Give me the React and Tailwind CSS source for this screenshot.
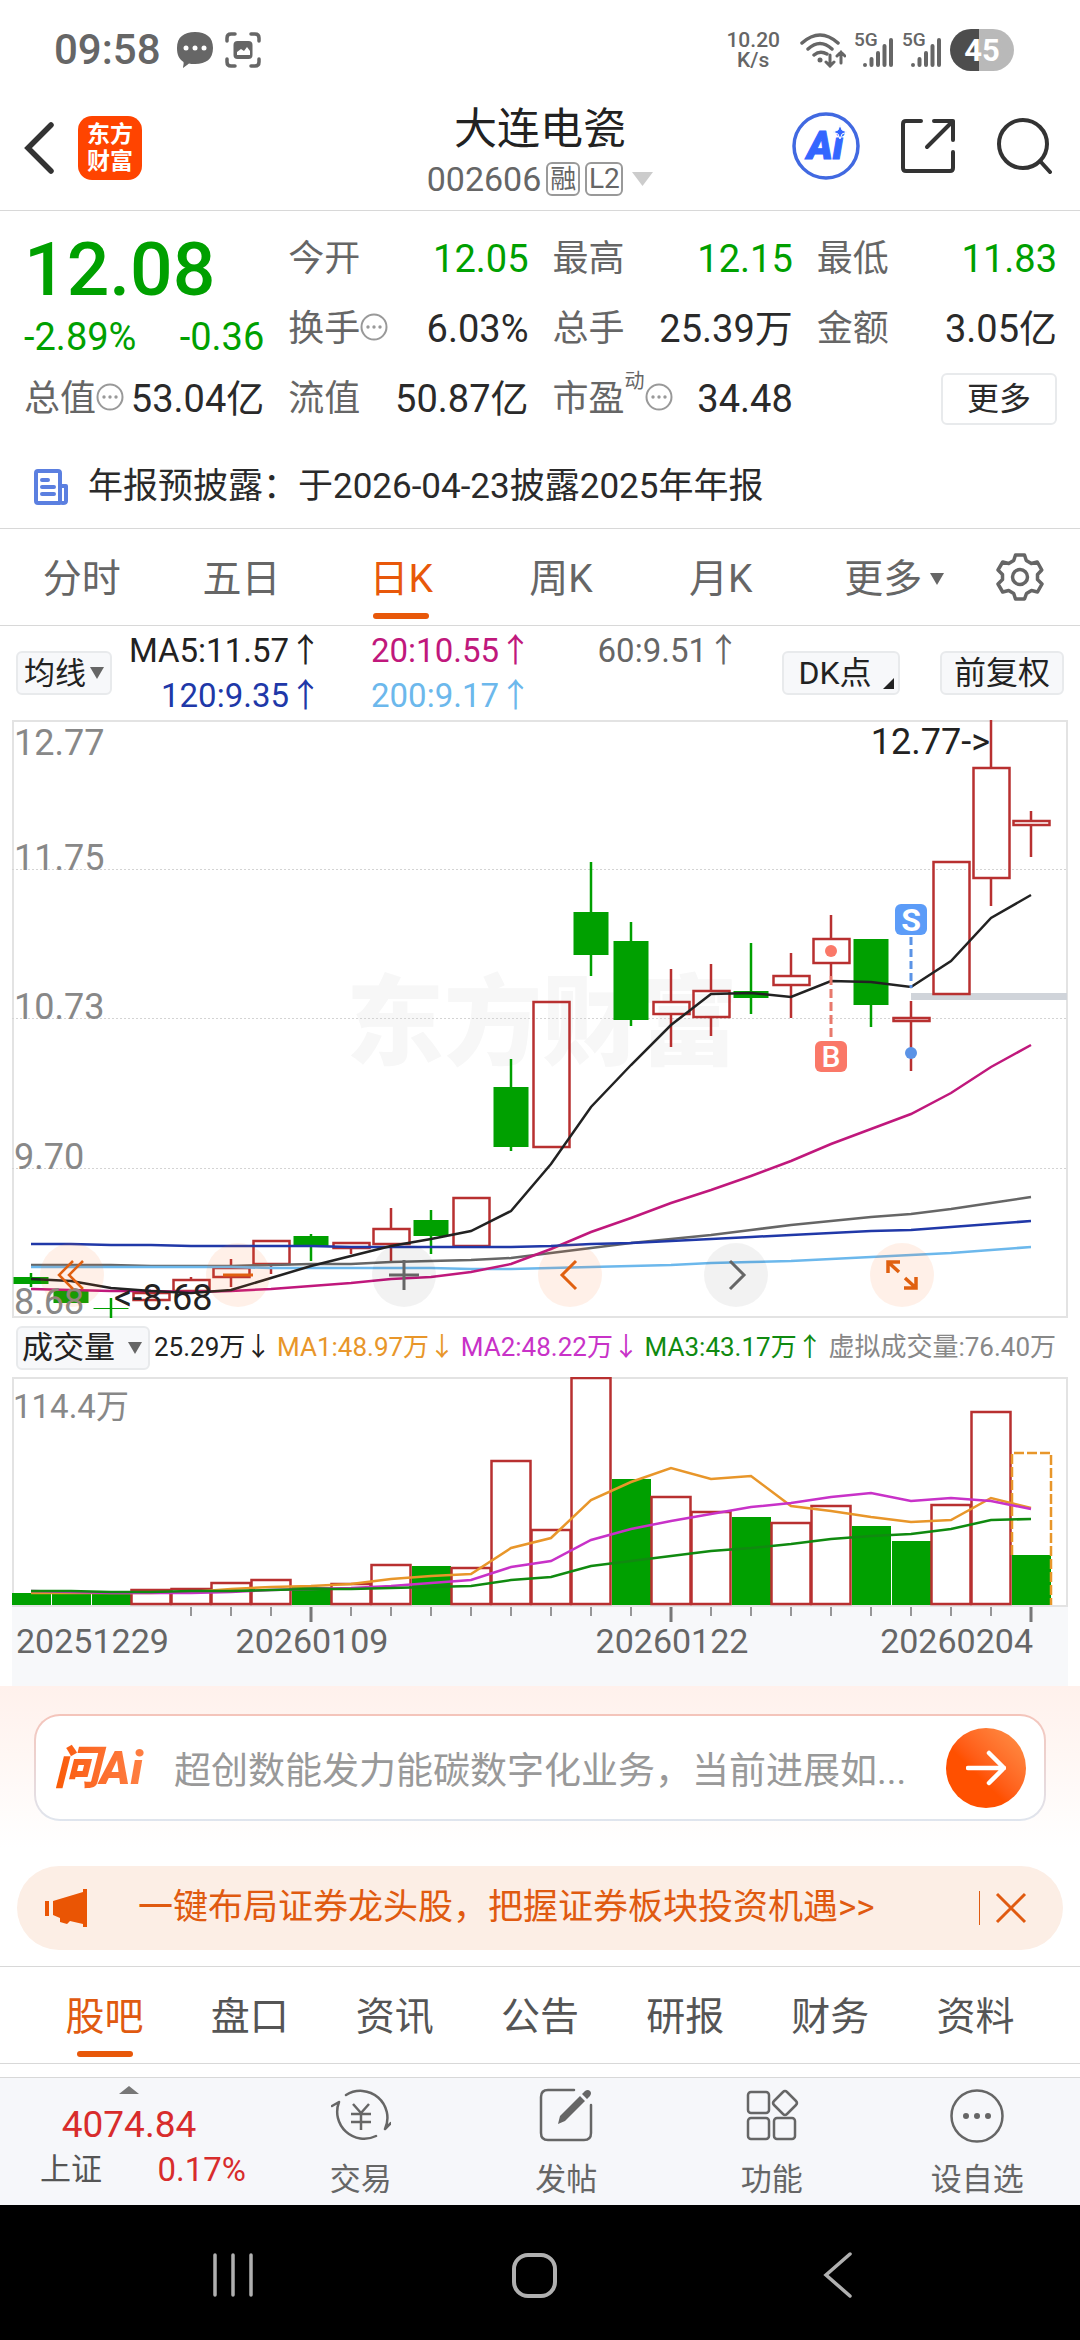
import { useState } from "react";

const STEP = 40;
const xAt = (i) => 19 + i * STEP;

// [color, high, bodyTop, bodyBottom, low]
const candles = [
  ["g", 553, 557, 564, 567],
  ["g", 571, 571, 583, 583],
  ["g", 578, 588, 589, 598],
  ["r", 572, 573, 580, 580],
  ["r", 557, 560, 571, 571],
  ["r", 539, 548, 557, 567],
  ["r", 520, 521, 544, 554],
  ["g", 514, 516, 526, 541],
  ["r", 522, 523, 528, 534],
  ["r", 488, 509, 524, 541],
  ["g", 490, 500, 516, 534],
  ["r", 478, 478, 526, 526],
  ["g", 339, 367, 427, 431],
  ["r", 282, 282, 427, 427],
  ["g", 142, 192, 235, 256],
  ["g", 202, 221, 300, 306],
  ["r", 249, 282, 294, 327],
  ["r", 244, 271, 297, 316],
  ["g", 223, 271, 278, 294],
  ["r", 233, 256, 265, 298],
  ["r", 195, 219, 243, 256],
  ["g", 219, 219, 285, 307],
  ["r", 281, 298, 301, 351],
  ["r", 142, 142, 274, 274],
  ["r", 0, 48, 158, 186],
  ["r", 91, 101, 105, 137],
];

const ma5 = [559, 561, 568, 571, 573, 570, 558, 546, 536, 526, 519, 511, 491, 444, 387, 345, 305, 274, 273, 277, 261, 262, 267, 241, 198, 175];
const ma20 = [569, 570, 571, 571, 572, 571, 569, 566, 563, 559, 557, 552, 544, 529, 512, 498, 483, 470, 456, 441, 424, 409, 394, 373, 347, 325];
const ma60 = [545, 545, 545, 546, 546, 546, 545, 544, 544, 542, 541, 540, 538, 533, 528, 523, 519, 515, 510, 505, 501, 497, 494, 489, 483, 477];
const ma120 = [524, 524, 525, 525, 526, 526, 526, 526, 527, 527, 527, 527, 527, 526, 524, 523, 521, 519, 517, 515, 513, 511, 510, 507, 504, 501];
const ma200 = [547, 547, 547, 547, 547, 547, 548, 548, 548, 548, 548, 549, 549, 548, 547, 546, 545, 543, 542, 541, 539, 537, 535, 533, 530, 527];

// [color, top]
const volumes = [
  ["g", 216], ["g", 216], ["g", 216], ["r", 213], ["r", 212], ["r", 206], ["r", 203],
  ["g", 210], ["r", 207], ["r", 188], ["g", 189], ["r", 191], ["r", 84], ["r", 153],
  ["r", 1], ["g", 102], ["r", 120], ["r", 135], ["g", 140], ["r", 146], ["r", 129],
  ["g", 149], ["g", 164], ["r", 128], ["r", 35], ["g", 178],
];

const vol1 = [216, 216, 216, 216, 215, 212, 210, 209, 207, 202, 199, 197, 171, 161, 123, 105, 91, 102, 99, 129, 134, 140, 145, 143, 121, 131];
const vol2 = [214, 215, 216, 216, 216, 215, 213, 212, 211, 209, 206, 203, 190, 184, 163, 152, 144, 137, 130, 126, 120, 116, 124, 121, 124, 132];
const vol3 = [214, 214, 215, 215, 214, 214, 213, 212, 212, 211, 210, 209, 203, 200, 189, 184, 179, 174, 171, 167, 162, 159, 157, 152, 143, 142];

const toPoints = (values) => values.map((y, i) => `${xAt(i)},${y}`).join(" ");

const periods = ["分时", "五日", "日K", "周K", "月K"];
const sections = ["股吧", "盘口", "资讯", "公告", "研报", "财务", "资料"];

const Line = ({ values, className }) => (
  <polyline points={toPoints(values)} fill="none" strokeWidth="2.5" className={className} />
);

const InfoDot = () => (
  <svg viewBox="0 0 28 28" className="mb-1 size-7 shrink-0" fill="#999">
    <circle cx="14" cy="14" r="12.5" fill="none" stroke="#999" strokeWidth="2" />
    <circle cx="8" cy="14" r="1.7" />
    <circle cx="14" cy="14" r="1.7" />
    <circle cx="20" cy="14" r="1.7" />
  </svg>
);

const Caret = ({ className }) => (
  <svg viewBox="0 0 14 12" preserveAspectRatio="none" className={className} fill="currentColor">
    <path d="M0 0h14L7 12z" />
  </svg>
);

const Signal = () => (
  <div className="relative h-9 w-10">
    <span className="absolute left-0 top-0 text-[19px] leading-4 font-medium">5G</span>
    <svg viewBox="0 0 40 36" className="size-full" stroke="currentColor" strokeWidth="4" strokeLinecap="round">
      <path d="M11 33v.1M17.500 33v-6M24 33V21M30.500 33V14M37 33V8" />
    </svg>
  </div>
);

const StatusBar = () => (
  <div className="flex h-[100px] items-center justify-between pr-[66px] pl-[54px] text-[#666]">
    <div className="flex items-center gap-3">
      <span className="mr-1 text-[42px] leading-none font-medium">09:58</span>
      <svg viewBox="0 0 36 36" className="size-9" fill="currentColor">
        <path d="M18 0C29 0 36 5 36 16S29 32 18 32c-2 0-5 0-6-.5L6 36c0-2 1-4 .5-6C2 27 0 23 0 16 0 5 7 0 18 0z" />
        <g fill="#fff">
          <circle cx="9" cy="16" r="2.500" />
          <circle cx="18" cy="16" r="2.500" />
          <circle cx="27" cy="16" r="2.500" />
        </g>
      </svg>
      <svg viewBox="0 0 36 36" className="size-9" fill="none" stroke="currentColor" strokeWidth="3.500" strokeLinecap="round">
        <path d="M2 9V6q0-4 4-4h4M26 2h4q4 0 4 4v3M34 27v3q0 4-4 4h-4M10 34H6q-4 0-4-4v-3" />
        <rect x="8.500" y="9" width="19" height="18" rx="4" fill="currentColor" stroke="none" />
        <path d="M12 23v-3l4-3 3 2 3-4 3 4v4z" fill="#fff" stroke="none" />
      </svg>
    </div>
    <div className="flex items-center gap-2">
      <div className="mr-3 text-center text-[21px] leading-5 font-medium">
        <p>10.20</p>
        <p>K/s</p>
      </div>
      <svg viewBox="0 0 46 36" className="h-9 w-[46px]" fill="none" stroke="currentColor" strokeWidth="3.500" strokeLinecap="round">
        <path d="M2 11Q20-5 38 11M8 17Q20 6 32 17M14 23Q20 18 27 22" />
        <circle cx="20" cy="28" r="2.500" fill="currentColor" stroke="none" />
        <path d="M30 23v11M26 30l4 4 4-4M41 31V20M37 24l4-4 4 4" strokeWidth="3" />
      </svg>
      <Signal />
      <Signal />
      <div className="flex h-[42px] w-16 items-center justify-center rounded-full bg-linear-to-r from-[#4d4d4d] from-45% to-[#b9b9b9] to-45% text-[31px] leading-none font-bold text-white">
        45
      </div>
    </div>
  </div>
);

const Header = () => (
  <header className="grid h-[111px] grid-cols-[1fr_auto_1fr] items-start border-b border-[#d8d8d8] px-6">
    <div className="flex items-center gap-6 pt-4">
      <button aria-label="返回">
        <svg viewBox="0 0 30 54" className="h-[54px] w-[30px]" fill="none" stroke="#333" strokeWidth="5.500" strokeLinecap="round">
          <path d="M27 4L4 27l23 23" />
        </svg>
      </button>
      <div className="flex size-16 flex-col items-center justify-center rounded-[14px] bg-[#ff4400] text-[23px] leading-[27px] font-bold text-white">
        <span>东方</span>
        <span>财富</span>
      </div>
    </div>
    <div className="flex flex-col items-center">
      <h1 className="text-[43px] leading-[58px] text-[#222]">大连电瓷</h1>
      <button className="flex h-[42px] items-center gap-[5px] text-[#666]">
        <span className="text-[34px]">002606</span>
        <span className="flex size-[34px] items-center justify-center rounded-md border-2 border-[#999] text-[26px]">融</span>
        <span className="flex h-[34px] w-[38px] items-center justify-center rounded-md border-2 border-[#999] text-[28px]">L2</span>
        <Caret className="ml-1 h-[14px] w-[21px] text-[#ccc]" />
      </button>
    </div>
    <div className="flex items-center justify-end gap-10 pt-3 pr-1">
      <button aria-label="Ai">
        <svg viewBox="0 0 68 68" className="size-[68px]">
          <circle cx="34" cy="34" r="32" fill="none" stroke="#4169e1" strokeWidth="3.500" />
          <text x="33" y="47" textAnchor="middle" className="fill-[#3366ff] stroke-[#3366ff] stroke-1 text-[39px] font-black italic">Ai</text>
          <path d="M48 13l2 5 5 2-5 2-2 5-2-5-5-2 5-2z" fill="#3366ff" stroke="#fff" strokeWidth="1" />
        </svg>
      </button>
      <button aria-label="分享">
        <svg viewBox="0 0 56 56" className="size-14" fill="none" stroke="#333" strokeWidth="4" strokeLinecap="round" strokeLinejoin="round">
          <path d="M21 3H6q-3 0-3 3v44q0 3 3 3h44q3 0 3-3V34M34 3h19v19M53 3L27 29" />
        </svg>
      </button>
      <button aria-label="搜索">
        <svg viewBox="0 0 56 56" className="size-14" fill="none" stroke="#333" strokeWidth="4" strokeLinecap="round">
          <circle cx="27" cy="26" r="24" />
          <path d="M44 43l10 11" />
        </svg>
      </button>
    </div>
  </header>
);

const Quote = ({ label, value, info, sup, up }) => (
  <div className="flex h-[70px] items-center justify-between whitespace-nowrap">
    <div className="flex items-center text-[36px] text-[#666]">
      {label}
      {sup && <sup className="mb-4 text-xl leading-none">{sup}</sup>}
      {info && <InfoDot />}
    </div>
    <span className={up ? "text-[38px] text-[#00a000]" : "text-[38px] text-[#2a2a2a]"}>{value}</span>
  </div>
);

const Summary = () => (
  <section className="border-b border-[#d8d8d8]">
    <div className="grid grid-cols-4 gap-x-6 pt-[13px] pr-[23px] pl-6">
      <div className="row-span-2 text-[#00a000]">
        <p className="pt-1 text-[75px] leading-[82px] font-medium">12.08</p>
        <div className="flex justify-between text-[38px] leading-[54px]">
          <span>-2.89%</span>
          <span>-0.36</span>
        </div>
      </div>
      <Quote label="今开" value="12.05" up />
      <Quote label="最高" value="12.15" up />
      <Quote label="最低" value="11.83" up />
      <Quote label="换手" value="6.03%" info />
      <Quote label="总手" value="25.39万" />
      <Quote label="金额" value="3.05亿" />
      <Quote label="总值" value="53.04亿" info />
      <Quote label="流值" value="50.87亿" />
      <Quote label="市盈" value="34.48" sup="动" info />
      <div className="flex items-center justify-end">
        <button className="h-[52px] w-[116px] rounded-md border-2 border-[#e8eaec] text-[32px] leading-none text-[#2a2a2a]">更多</button>
      </div>
    </div>
    <a href="#report" className="flex h-[94px] items-center gap-5 px-[34px] pt-3 text-[35px] text-[#2a2a2a]">
      <svg viewBox="0 0 34 36" className="h-9 w-[34px]" fill="none" stroke="#5b7fe0" strokeWidth="4" strokeLinecap="round" strokeLinejoin="round">
        <path d="M26 34H4q-2 0-2-2V4q0-2 2-2h20q2 0 2 2v28q0 2 3 2t3-2V17h-5" />
        <path d="M8 11h6M8 18h12M8 25h12" />
      </svg>
      年报预披露：于2026-04-23披露2025年年报
    </a>
  </section>
);

const PeriodTabs = () => {
  const [active, setActive] = useState("日K");

  return (
    <nav className="grid h-[97px] grid-cols-[repeat(6,4fr)_3fr] border-b border-[#d8d8d8] pl-[2px] text-[39px] text-[#666]">
      {periods.map((period) => (
        <button
          key={period}
          onClick={() => setActive(period)}
          className={`relative pt-1 ${period === active ? "text-[#e8580a]" : ""}`}
        >
          {period}
          {period === active && <span className="absolute bottom-[6px] left-1/2 h-[6px] w-14 -translate-x-1/2 rounded-full bg-[#e8580a]" />}
        </button>
      ))}
      <button className="flex items-center justify-end gap-2 pt-1 pr-4">
        更多
        <Caret className="h-3 w-[14px]" />
      </button>
      <button aria-label="设置" className="flex items-center justify-center">
        <svg viewBox="0 0 48 48" className="size-12" fill="none" stroke="#666" strokeWidth="3.500" strokeLinejoin="round">
          <path d="M19.500 2h9l1.800 5.500 5 3 6-1.500 4.500 8-4.300 4.500v5L46 31l-4.500 8-6-1.500-5 3L28.500 46h-9l-1.800-5.500-5-3-6 1.500L2 31l4.500-4.500v-5L2 17l4.700-8 6 1.500 5-3z" />
          <circle cx="24" cy="24" r="7.500" />
        </svg>
      </button>
    </nav>
  );
};

const Averages = () => (
  <div className="flex h-[94px] items-center px-4">
    <div className="relative">
      <select
        aria-label="指标"
        className="block h-11 w-24 appearance-none rounded-md border-2 border-[#e8eaec] bg-[#f7f8fa] pl-1.5 text-[31px] leading-none text-[#222]"
      >
        <option>均线</option>
      </select>
      <Caret className="pointer-events-none absolute top-4 right-2 h-3 w-[14px] text-[#666]" />
    </div>
    <div className="grid grid-cols-[210px_210px_208px] text-right text-[33px] leading-[45px] whitespace-nowrap">
      <span className="text-[#222]">MA5:11.57↑</span>
      <span className="text-[#c0187c]">20:10.55↑</span>
      <span className="text-[#666]">60:9.51↑</span>
      <span className="text-[#2038a8]">120:9.35↑</span>
      <span className="text-[#6cb8ec]">200:9.17↑</span>
    </div>
    <div className="ml-auto flex gap-10 text-[32px] leading-none text-[#222]">
      <button className="relative h-11 w-[118px] rounded-md border-2 border-[#e8eaec] bg-[#f7f8fa] pr-3">
        DK点
        <svg viewBox="0 0 10 10" className="absolute right-1 bottom-1 size-[11px]">
          <path d="M10 0v10H0z" fill="#222" />
        </svg>
      </button>
      <button className="h-11 w-[124px] rounded-md border-2 border-[#e8eaec] bg-[#f7f8fa]">前复权</button>
    </div>
  </div>
);

const CandleChart = () => (
  <div className="relative mx-3">
    <svg viewBox="0 0 1056 598" className="block h-auto w-full overflow-visible">
      <text x="334" y="337" className="fill-[#f7f7f7] text-[98px] font-black">东方财富</text>
      <rect x="1" y="1" width="1054" height="596" fill="none" stroke="#e3e3e3" strokeWidth="2" />
      {[149.5, 298.5, 448.5].map((y) => (
        <path key={y} d={`M0 ${y}H1055`} stroke="#d4d4d4" strokeDasharray="2 2" />
      ))}
      <path d="M899 276.500H1055" stroke="#d0d4da" strokeWidth="7" />
      {candles.map(([color, high, top, bottom, low], i) =>
        color === "g" ? (
          <g key={i} fill="#00a000" stroke="#00a000">
            <path d={`M${xAt(i)} ${high}V${low}`} strokeWidth="2.500" />
            <rect x={xAt(i) - 17.5} y={top} width="35" height={bottom - top} stroke="none" />
          </g>
        ) : (
          <g key={i} fill="none" stroke="#b83030" strokeWidth="2.500">
            <path d={`M${xAt(i)} ${high}V${top}M${xAt(i)} ${bottom}V${low}`} />
            <rect x={xAt(i) - 17.5} y={top} width="36" height={bottom - top} />
          </g>
        )
      )}
      <Line values={ma60} className="stroke-[#666]" />
      <Line values={ma200} className="stroke-[#6cb8ec]" />
      <Line values={ma20} className="stroke-[#c0187c]" />
      <Line values={ma120} className="stroke-[#2038a8]" />
      <Line values={ma5} className="stroke-[#222]" />

      {/* buy and sell marks */}
      <path d="M819 256V318" stroke="#e8796c" strokeWidth="3" strokeDasharray="9 4" />
      <circle cx="819" cy="231" r="6" fill="#fa7868" />
      <rect x="803" y="321" width="32" height="31" rx="6" fill="#fa7868" />
      <text x="819" y="347" textAnchor="middle" className="fill-white text-[30px] font-medium">B</text>
      <path d="M899 217V268" stroke="#5b93e6" strokeWidth="3" strokeDasharray="8 4" />
      <circle cx="899" cy="333" r="6" fill="#5b93e6" />
      <rect x="883" y="184" width="32" height="31" rx="6" fill="#5c9cf8" />
      <text x="899" y="211" textAnchor="middle" className="fill-white text-[32px] font-bold">S</text>

      <g className="fill-[#888] text-[36px]">
        <text x="2" y="35">12.77</text>
        <text x="2" y="150">11.75</text>
        <text x="2" y="299">10.73</text>
        <text x="2" y="449">9.70</text>
        <text x="2" y="594">8.68</text>
      </g>
      <g className="fill-[#222] text-[36px]">
        <text x="978" y="34" textAnchor="end">12.77-&gt;</text>
        <text x="102" y="590">&lt;-8.68</text>
      </g>
    </svg>
    <div className="absolute bottom-[11px] left-7 flex gap-[102px] text-[#e06010] *:flex *:size-16 *:items-center *:justify-center *:rounded-full">
      <button aria-label="最早" className="bg-[#ff6a1a]/10">
        <svg viewBox="0 0 32 32" className="size-8" fill="none" stroke="currentColor" strokeWidth="2.500">
          <path d="M17 2L3 16l14 14M27 2L13 16l14 14" />
        </svg>
      </button>
      <button aria-label="缩小" className="bg-[#ff6a1a]/10">
        <svg viewBox="0 0 32 32" className="size-8" stroke="currentColor" strokeWidth="3">
          <path d="M1 16h30" />
        </svg>
      </button>
      <button aria-label="放大" className="bg-black/5 text-[#666]">
        <svg viewBox="0 0 32 32" className="size-8" stroke="currentColor" strokeWidth="3">
          <path d="M1 16h30M16 1v30" />
        </svg>
      </button>
      <button aria-label="向左" className="bg-[#ff6a1a]/10">
        <svg viewBox="0 0 32 32" className="size-8" fill="none" stroke="currentColor" strokeWidth="3">
          <path d="M22 2L8 16l14 14" />
        </svg>
      </button>
      <button aria-label="向右" className="bg-black/5 text-[#666]">
        <svg viewBox="0 0 32 32" className="size-8" fill="none" stroke="currentColor" strokeWidth="3">
          <path d="M10 2l14 14-14 14" />
        </svg>
      </button>
      <button aria-label="全屏" className="bg-[#ff6a1a]/10">
        <svg viewBox="0 0 32 32" className="size-8" fill="none" stroke="currentColor" strokeWidth="3.500">
          <path d="M2 14V3h12M2 3l11 10M30 18v11H18M30 29L19 19" />
        </svg>
      </button>
    </div>
  </div>
);

const VolumeHeader = () => (
  <div className="flex h-[59px] items-center gap-1 pr-6 pl-4">
    <div className="relative">
      <select
        aria-label="副图指标"
        className="block h-11 w-[134px] appearance-none rounded-md border-2 border-[#e8eaec] bg-[#f7f8fa] pl-1 text-[31px] leading-none text-[#222]"
      >
        <option>成交量</option>
      </select>
      <Caret className="pointer-events-none absolute top-4 right-2 h-3 w-[14px] text-[#666]" />
    </div>
    <div className="flex flex-1 justify-between text-[26px] whitespace-nowrap">
      <span className="text-[#222]">25.29万↓</span>
      <span className="text-[#e8962a]">MA1:48.97万↓</span>
      <span className="text-[#c832c8]">MA2:48.22万↓</span>
      <span className="text-[#108a10]">MA3:43.17万↑</span>
      <span className="text-[#888]">虚拟成交量:76.40万</span>
    </div>
  </div>
);

const VolumeChart = () => (
  <div className="mx-3 bg-[#f7f8fa]">
    <svg viewBox="0 0 1056 309" className="block h-auto w-full">
      <rect x="1" y="1" width="1054" height="228" fill="#fff" stroke="#e3e3e3" strokeWidth="2" />
      {volumes.map(([color, top], i) =>
        color === "g" ? (
          <rect key={i} x={Math.max(xAt(i) - 19, 0)} y={top} width="39" height={228 - top} fill="#00a000" />
        ) : (
          <rect key={i} x={xAt(i) - 19.5} y={top} width="39" height={227 - top} fill="none" stroke="#b83030" strokeWidth="2.500" />
        )
      )}
      <path d="M1000 178V76H1039V228" fill="none" stroke="#e8962a" strokeWidth="2.500" strokeDasharray="10 3" />
      <Line values={vol1} className="stroke-[#e8962a]" />
      <Line values={vol2} className="stroke-[#c832c8]" />
      <Line values={vol3} className="stroke-[#108a10]" />
      <text x="1" y="41" className="fill-[#888] text-[33px]">114.4万</text>
      {volumes.map((_, i) => {
        if (i < 4) return null;
        const major = [7, 16, 25].includes(i);
        return <path key={i} d={`M${xAt(i)} 230V${major ? 245 : 239}`} stroke="#777" strokeWidth={major ? 3 : 1.5} />;
      })}
      <g className="fill-[#666] text-[34px]">
        <text x="4" y="276">20251229</text>
        <text x="300" y="276" textAnchor="middle">20260109</text>
        <text x="660" y="276" textAnchor="middle">20260122</text>
        <text x="1021" y="276" textAnchor="end">20260204</text>
      </g>
    </svg>
  </div>
);

const AskAi = () => (
  <section className="bg-linear-to-b from-[#fff1ec] to-white to-90% px-[34px] pt-7 pb-[45px]">
    <div className="rounded-[26px] bg-linear-to-b from-[#f4c4ba] to-[#dfe5ee] p-[2px]">
      <form className="flex h-[103px] items-center rounded-3xl bg-white px-[18px]">
        <span className="w-[120px] bg-linear-to-r from-[#fa5a00] to-[#ff8a50] bg-clip-text text-[46px] leading-[60px] font-black whitespace-nowrap text-transparent italic">
          问Ai
        </span>
        <input
          aria-label="问Ai"
          placeholder="超创数能发力能碳数字化业务，当前进展如..."
          className="min-w-0 flex-1 pt-2 text-[37px] outline-none placeholder:text-[#999]"
        />
        <button
          type="button"
          aria-label="发送"
          className="ml-8 flex size-20 items-center justify-center rounded-full bg-linear-to-tr from-[#ff5000] from-40% to-[#ff9248]"
        >
          <svg viewBox="0 0 40 36" className="h-9 w-10" fill="none" stroke="#fff" strokeWidth="4.500" strokeLinecap="round" strokeLinejoin="round">
            <path d="M2 18h36M23 3l15 15-15 15" />
          </svg>
        </button>
      </form>
    </div>
  </section>
);

const Promo = () => (
  <div className="mx-[17px] flex h-[84px] items-center rounded-full bg-[#fceee5] pr-9 pl-7 text-[#e05a10]">
    <svg viewBox="0 0 42 38" className="h-[38px] w-[42px]" fill="#ea5504">
      <path d="M0 12h4v15H0zM8 12L38 3V0h4v38h-4v-3l-13-3-3 3-7-2v-4l-7-3z" />
    </svg>
    <a href="#promo" className="ml-[51px] flex-1 text-[35px] whitespace-nowrap">
      一键布局证券龙头股，把握证券板块投资机遇&gt;&gt;
    </a>
    <button aria-label="关闭" className="border-l border-[#e05a10] pl-[15px]">
      <svg viewBox="0 0 32 34" className="h-[34px] w-8" fill="none" stroke="currentColor" strokeWidth="3">
        <path d="M2 3l28 28M30 3L2 31" />
      </svg>
    </button>
  </div>
);

const SectionTabs = () => {
  const [active, setActive] = useState("股吧");

  return (
    <nav className="mt-4 flex h-[98px] border-y border-[#d8d8d8] px-8 text-[39px] text-[#555]">
      {sections.map((section) => (
        <button
          key={section}
          onClick={() => setActive(section)}
          className={`relative flex-1 pt-1 ${section === active ? "text-[#e05a10]" : ""}`}
        >
          {section}
          {section === active && <span className="absolute bottom-[6px] left-1/2 h-[6px] w-14 -translate-x-1/2 rounded-full bg-[#e8580a]" />}
        </button>
      ))}
    </nav>
  );
};

const Action = ({ label, children }) => (
  <button className="flex flex-1 flex-col items-center pt-2 text-[31px] leading-[44px] text-[#666]">
    <svg viewBox="0 0 60 60" className="mb-3 size-[60px]" fill="none" stroke="currentColor" strokeWidth="2.500" strokeLinecap="round" strokeLinejoin="round">
      {children}
    </svg>
    {label}
  </button>
);

const BottomBar = () => (
  <footer className="mt-[13px] flex h-32 border-t border-[#d8d8d8] bg-[#f6f7fa]">
    <button className="flex w-[258px] flex-col items-center pt-2 text-[#d82c2c]">
      <Caret className="h-2 w-5 rotate-180 text-[#777]" />
      <span className="mt-2 text-[37px] leading-[46px]">4074.84</span>
      <span className="flex w-full justify-between pr-3 pl-10 text-[33px] leading-[44px]">
        <span className="text-[31px] text-[#555]">上证</span>
        <span>0.17%</span>
      </span>
    </button>
    <Action label="交易">
      <path d="M15 9A27 27 0 0 1 54 43l6-6M45 50A27 27 0 0 1 8 16l-7 4" />
      <path d="M22 18l8 9 8-9M30 27v17M20 28h20M20 36h20" strokeLinecap="butt" />
    </Action>
    <Action label="发帖">
      <path d="M38 4H12q-7 0-7 7v36q0 7 7 7h36q7 0 7-7V19" />
      <path d="M22 38l2-8 20-20 5 5-20 20zM46 8l3-3q3-2 5 0t0 5l-3 3z" fill="currentColor" stroke="none" />
    </Action>
    <Action label="功能">
      <rect x="6" y="6" width="21" height="21" rx="3" />
      <rect x="6" y="32" width="21" height="21" rx="3" />
      <rect x="32" y="32" width="21" height="21" rx="3" />
      <path d="M41 6q2-2 4 0l9 9q2 2 0 4l-9 9q-2 2-4 0l-9-9q-2-2 0-4z" />
    </Action>
    <Action label="设自选">
      <circle cx="30" cy="30" r="25.500" />
      <g fill="currentColor" stroke="none">
        <circle cx="19" cy="30" r="3" />
        <circle cx="30" cy="30" r="3" />
        <circle cx="41" cy="30" r="3" />
      </g>
    </Action>
  </footer>
);

const SystemNav = () => (
  <div className="flex h-[135px] items-center justify-between bg-black pt-1 pr-[218px] pl-[208px] text-[#b0b0b0]">
    <button aria-label="最近任务">
      <svg viewBox="0 0 48 48" className="size-12" stroke="currentColor" strokeWidth="3.500" strokeLinecap="round">
        <path d="M7 4v40M25 4v40M43 4v40" />
      </svg>
    </button>
    <button aria-label="主页">
      <svg viewBox="0 0 48 48" className="size-12" fill="none" stroke="currentColor" strokeWidth="4">
        <rect x="3" y="4" width="41" height="41" rx="14" />
      </svg>
    </button>
    <button aria-label="返回上页">
      <svg viewBox="0 0 48 48" className="size-12" fill="none" stroke="currentColor" strokeWidth="3.500" strokeLinecap="round">
        <path d="M36 3L12 24l24 21" />
      </svg>
    </button>
  </div>
);

const App = () => {
  return (
    <div lang="zh-CN" className="w-full overflow-hidden bg-white font-['Roboto','Noto_Sans_CJK_SC',sans-serif]">
      <StatusBar />
      <Header />
      <Summary />
      <PeriodTabs />
      <Averages />
      <CandleChart />
      <VolumeHeader />
      <VolumeChart />
      <AskAi />
      <Promo />
      <SectionTabs />
      <BottomBar />
      <SystemNav />
    </div>
  );
};

export default App;
